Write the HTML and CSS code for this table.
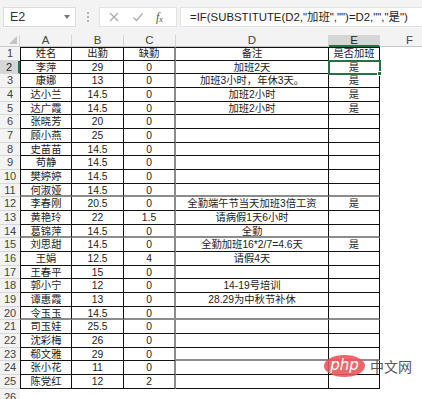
FILE: index.html
```html
<!DOCTYPE html>
<html lang="zh">
<head>
<meta charset="utf-8">
<title>Sheet</title>
<link rel="stylesheet" href="styles.css">
</head>
<body>
<div class="app">
  <div class="fbar">
    <div class="namebox"><span>E2</span><span class="dd"></span></div>
    <div class="dots"><i></i><i></i><i></i></div>
    <div class="fxbox">
      <svg class="ic" width="12" height="12" viewBox="0 0 12 12"><path d="M2 2L10 10M10 2L2 10" stroke="#a8a8a8" stroke-width="1.2" fill="none"/></svg>
      <svg class="ic" width="12" height="12" viewBox="0 0 12 12"><path d="M1.5 6.5L4.5 9.5L10.5 2.5" stroke="#a8a8a8" stroke-width="1.2" fill="none"/></svg>
      <span class="fx">f<sub>x</sub></span>
    </div>
    <div class="formula">=IF(SUBSTITUTE(D2,"加班","")=D2,"","是")</div>
  </div>
  <div class="sheet">
    <div class="corner"><span class="tri"></span></div>
    <div class="ch">A</div><div class="ch">B</div><div class="ch">C</div><div class="ch">D</div><div class="ch sel">E</div><div class="ch">F</div>

    <div class="rh">1</div><div class="c a t">姓名</div><div class="c t">出勤</div><div class="c t gr">缺勤</div><div class="c t">备注</div><div class="c t">是否加班</div><div class="f"></div>
    <div class="rh rsel">2</div><div class="c a">李萍</div><div class="c">29</div><div class="c gr">0</div><div class="c">加班2天</div><div class="c cur">是<span class="handle"></span></div><div class="f"></div>
    <div class="rh">3</div><div class="c a">康娜</div><div class="c">13</div><div class="c gr">0</div><div class="c">加班3小时，年休3天。</div><div class="c">是</div><div class="f"></div>
    <div class="rh">4</div><div class="c a">达小兰</div><div class="c">14.5</div><div class="c gr">0</div><div class="c">加班2小时</div><div class="c">是</div><div class="f"></div>
    <div class="rh">5</div><div class="c a">达广霞</div><div class="c">14.5</div><div class="c gr">0</div><div class="c">加班2小时</div><div class="c">是</div><div class="f"></div>
    <div class="rh">6</div><div class="c a">张晓芳</div><div class="c">20</div><div class="c gr">0</div><div class="c"></div><div class="c"></div><div class="f"></div>
    <div class="rh">7</div><div class="c a">顾小燕</div><div class="c">25</div><div class="c gr">0</div><div class="c"></div><div class="c"></div><div class="f"></div>
    <div class="rh">8</div><div class="c a">史苗苗</div><div class="c">14.5</div><div class="c gr">0</div><div class="c"></div><div class="c"></div><div class="f"></div>
    <div class="rh">9</div><div class="c a">苟静</div><div class="c">14.5</div><div class="c gr">0</div><div class="c"></div><div class="c"></div><div class="f"></div>
    <div class="rh">10</div><div class="c a">樊婷婷</div><div class="c">14.5</div><div class="c gr">0</div><div class="c"></div><div class="c"></div><div class="f"></div>
    <div class="rh">11</div><div class="c a gb">何淑娅</div><div class="c gb">14.5</div><div class="c gr gb">0</div><div class="c gb"></div><div class="c gb"></div><div class="f"></div>
    <div class="rh">12</div><div class="c a">李春刚</div><div class="c">20.5</div><div class="c gr">0</div><div class="c">全勤端午节当天加班3倍工资</div><div class="c">是</div><div class="f"></div>
    <div class="rh">13</div><div class="c a">黄艳玲</div><div class="c">22</div><div class="c gr">1.5</div><div class="c">请病假1天6小时</div><div class="c"></div><div class="f"></div>
    <div class="rh">14</div><div class="c a gb">葛锦萍</div><div class="c gb">14.5</div><div class="c gr gb">0</div><div class="c gb">全勤</div><div class="c gb"></div><div class="f"></div>
    <div class="rh">15</div><div class="c a">刘思甜</div><div class="c">14.5</div><div class="c gr">0</div><div class="c">全勤加班16*2/7=4.6天</div><div class="c">是</div><div class="f"></div>
    <div class="rh">16</div><div class="c a">王娟</div><div class="c">12.5</div><div class="c gr">4</div><div class="c">请假4天</div><div class="c"></div><div class="f"></div>
    <div class="rh">17</div><div class="c a">王春平</div><div class="c">15</div><div class="c gr">0</div><div class="c"></div><div class="c"></div><div class="f"></div>
    <div class="rh">18</div><div class="c a">郭小宁</div><div class="c">12</div><div class="c gr">0</div><div class="c">14-19号培训</div><div class="c"></div><div class="f"></div>
    <div class="rh">19</div><div class="c a">谭惠霞</div><div class="c">13</div><div class="c gr">0</div><div class="c">28.29为中秋节补休</div><div class="c"></div><div class="f"></div>
    <div class="rh">20</div><div class="c a gb">令玉玉</div><div class="c gb">14.5</div><div class="c gr gb">0</div><div class="c gb"></div><div class="c gb"></div><div class="f"></div>
    <div class="rh">21</div><div class="c a">司玉娃</div><div class="c">25.5</div><div class="c gr">0</div><div class="c"></div><div class="c"></div><div class="f"></div>
    <div class="rh">22</div><div class="c a">沈彩梅</div><div class="c">26</div><div class="c gr">0</div><div class="c"></div><div class="c"></div><div class="f"></div>
    <div class="rh">23</div><div class="c a">郗文雅</div><div class="c">29</div><div class="c gr">0</div><div class="c gb"></div><div class="c gb"></div><div class="f"></div>
    <div class="rh">24</div><div class="c a">张小花</div><div class="c">11</div><div class="c gr">0</div><div class="c"></div><div class="c"></div><div class="f"></div>
    <div class="rh">25</div><div class="c a">陈党红</div><div class="c">12</div><div class="c gr">2</div><div class="c"></div><div class="c"></div><div class="f"></div>
    <div class="rh last">26</div><div class="f"></div><div class="f"></div><div class="f"></div><div class="f"></div><div class="f"></div><div class="f"></div>
  </div>
  <div class="watermark">
    <span class="php">php</span><span class="zw">中文网</span>
  </div>
</div>
</body>
</html>
```
FILE: styles.css
```css
* { box-sizing: border-box; }
html, body { margin: 0; padding: 0; }
body {
  width: 422px;
  height: 399px;
  overflow: hidden;
  background: #f3f3f3;
  font-family: "Liberation Sans", "Noto Sans CJK SC", sans-serif;
  color: #222;
}
.app { position: relative; width: 422px; height: 399px; overflow: hidden; }

.fbar {
  height: 35px;
  display: flex;
  align-items: flex-start;
  padding-top: 7px;
  background: #f3f3f3;
}
.namebox {
  margin-left: 3px;
  width: 73px;
  height: 20px;
  background: #fff;
  border: 1px solid #dcdcdc;
  display: flex;
  align-items: center;
  justify-content: space-between;
  padding: 0 5px 0 6px;
  font-size: 12.5px;
  color: #333;
}
.dd {
  width: 0; height: 0;
  border-left: 3.5px solid transparent;
  border-right: 3.5px solid transparent;
  border-top: 4px solid #777;
}
.dots {
  width: 23px;
  height: 20px;
  display: flex;
  flex-direction: column;
  align-items: center;
  justify-content: center;
  gap: 2px;
}
.dots i { display: block; width: 2px; height: 2px; background: #b4b4b4; }
.fxbox {
  width: 78px;
  height: 20px;
  background: #fff;
  border: 1px solid #e2e2e2;
  display: flex;
  align-items: center;
  padding-left: 8px;
  gap: 12px;
}
.fx {
  font-family: "Liberation Serif", serif;
  font-style: italic;
  font-size: 12px;
  color: #555;
  line-height: 1;
}
.fx sub { font-size: 8px; vertical-align: -1px; }
.formula {
  margin-left: 3px;
  flex: 1;
  height: 20px;
  background: #fff;
  border: 1px solid #e2e2e2;
  border-right: none;
  padding-left: 9px;
  font-size: 11.4px;
  line-height: 18px;
  color: #222;
  white-space: nowrap;
  overflow: hidden;
}

.sheet {
  display: grid;
  grid-template-columns: 20px 52px 52px 52px 153px 51px 60px;
  grid-template-rows: 12px repeat(26, 13.68px);
  background: #fff;
  font-size: 10.3px;
}
.corner {
  background: #f3f3f3;
  border-right: 1px solid #d4d4d4;
  border-bottom: 1px solid #c8c8c8;
  position: relative;
}
.tri {
  position: absolute;
  right: 2px; bottom: 2px;
  width: 0; height: 0;
  border-left: 8px solid transparent;
  border-bottom: 8px solid #c4c4c4;
}
.ch {
  background: #f3f3f3;
  border-right: 1px solid #d4d4d4;
  border-bottom: 1px solid #c8c8c8;
  font-size: 11.5px;
  color: #444;
  text-align: center;
  line-height: 11px;
}
.ch.sel {
  background: #d6d6d6;
  border-bottom: 2px solid #217346;
  color: #222;
}
.rh {
  background: #f3f3f3;
  border-bottom: 1px solid #d8d8d8;
  font-size: 11px;
  color: #444;
  text-align: center;
  line-height: 13px;
}
.rh.last { line-height: 14px; padding-top: 1px; }
.rh.rsel {
  background: #d6d6d6;
  border-right: 2px solid #217346;
  color: #222;
}
.c {
  border-right: 1px solid #111;
  border-bottom: 1px solid #111;
  text-align: center;
  line-height: 13px;
  white-space: nowrap;
  position: relative;
}
.c.a { border-left: 1px solid #111; }
.c.t { border-top: 1px solid #111; line-height: 12px; }
.c.gr { border-right: 2px solid #8c8c8c; }
.c.gb { border-bottom: 2px solid #8c8c8c; }
.c.cur { outline: 2px solid #217346; outline-offset: -1px; z-index: 2; }
.handle {
  position: absolute;
  right: -3px; bottom: -3px;
  width: 5px; height: 5px;
  background: #217346;
  border: 1px solid #fff;
}
.f { background: #fff; }

.watermark {
  position: absolute;
  left: 324px;
  top: 355px;
  display: flex;
  align-items: center;
  gap: 5px;
}
.php {
  width: 41px;
  height: 22px;
  border-radius: 50%;
  background: #e8585b;
  color: #fff;
  font-family: "DejaVu Sans", sans-serif;
  font-style: italic;
  font-size: 15px;
  line-height: 20px;
  text-align: center;
  opacity: 0.9;
}
.zw {
  font-family: "Noto Sans CJK SC", sans-serif;
  font-size: 14px;
  color: #3a3a3a;
  letter-spacing: 0px;
  opacity: 0.85;
}
```
